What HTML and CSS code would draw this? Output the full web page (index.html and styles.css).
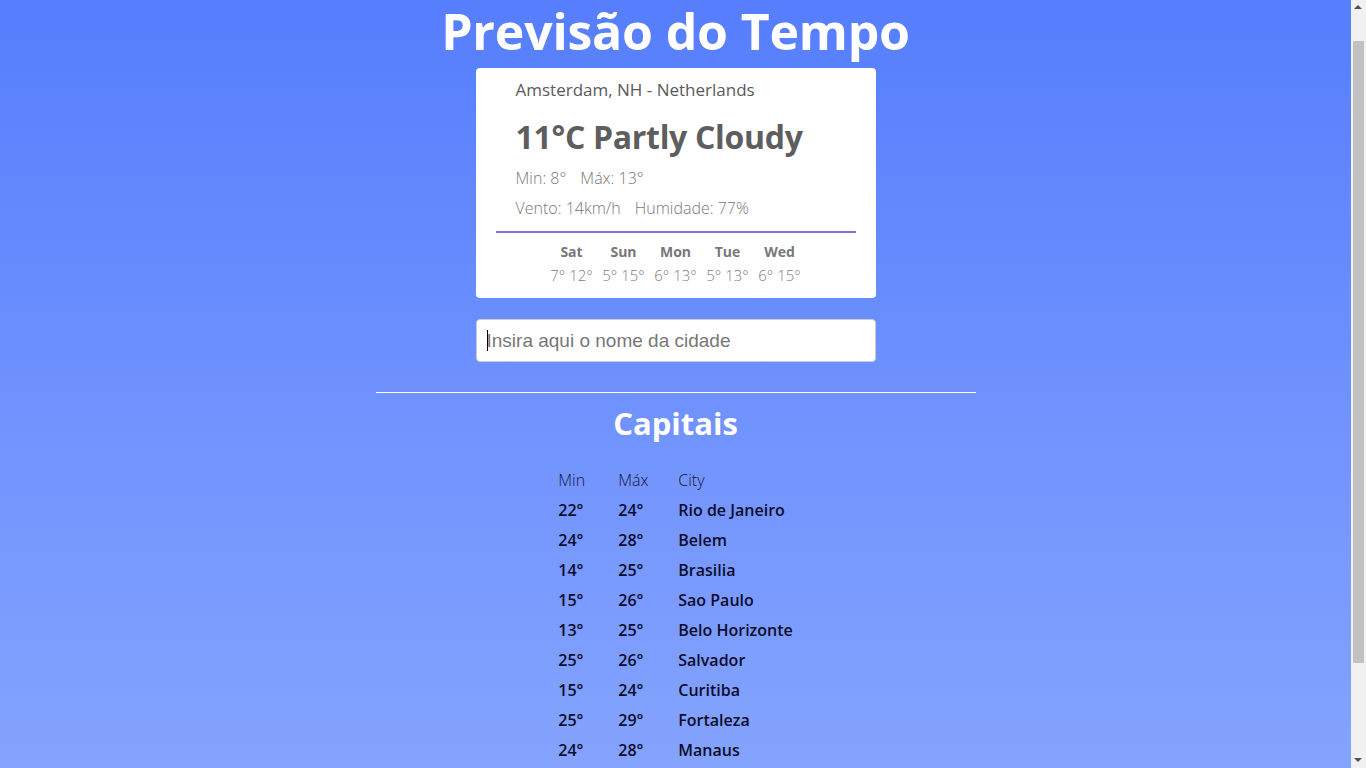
FILE: index.html
```html
<!DOCTYPE html>
<html lang="pt">
<head>
<meta charset="utf-8">
<title>Previsão do Tempo</title>
<link rel="stylesheet" href="styles.css">
</head>
<body>
<main class="page">
  <h1 class="title">Previsão do Tempo</h1>
  <section class="card">
    <p class="location">Amsterdam, NH - Netherlands</p>
    <h2 class="current">11°C Partly Cloudy</h2>
    <p class="info first"><span>Min: 8°</span><span>Máx: 13°</span></p>
    <p class="info"><span>Vento: 14km/h</span><span>Humidade: 77%</span></p>
    <div class="forecast">
      <div class="day"><span class="dname">Sat</span><span class="dtemp">7° 12°</span></div>
      <div class="day"><span class="dname">Sun</span><span class="dtemp">5° 15°</span></div>
      <div class="day"><span class="dname">Mon</span><span class="dtemp">6° 13°</span></div>
      <div class="day"><span class="dname">Tue</span><span class="dtemp">5° 13°</span></div>
      <div class="day"><span class="dname">Wed</span><span class="dtemp">6° 15°</span></div>
    </div>
  </section>
  <div class="search-wrap">
    <span class="caret"></span>
    <input class="search" type="text" placeholder="Insira aqui o nome da cidade">
  </div>
  <hr class="sep">
  <h2 class="caps-title">Capitais</h2>
  <table class="capitals">
    <thead>
      <tr><th>Min</th><th>Máx</th><th>City</th></tr>
    </thead>
    <tbody>
      <tr><td>22°</td><td>24°</td><td>Rio de Janeiro</td></tr>
      <tr><td>24°</td><td>28°</td><td>Belem</td></tr>
      <tr><td>14°</td><td>25°</td><td>Brasilia</td></tr>
      <tr><td>15°</td><td>26°</td><td>Sao Paulo</td></tr>
      <tr><td>13°</td><td>25°</td><td>Belo Horizonte</td></tr>
      <tr><td>25°</td><td>26°</td><td>Salvador</td></tr>
      <tr><td>15°</td><td>24°</td><td>Curitiba</td></tr>
      <tr><td>25°</td><td>29°</td><td>Fortaleza</td></tr>
      <tr><td>24°</td><td>28°</td><td>Manaus</td></tr>
      <tr><td>23°</td><td>30°</td><td>Joao Pessoa</td></tr>
    </tbody>
  </table>
</main>
<div class="scrollbar" aria-hidden="true">
  <span class="arrow up"></span>
  <span class="thumb"></span>
  <span class="arrow down"></span>
</div>
</body>
</html>
```

FILE: styles.css
```css
html {
  min-height: 100%;
  background: linear-gradient(to bottom, #567efd 0%, #8aa8fe 100%);
}
body {
  margin: 0;
  padding-right: 15px;
  font-family: "Open Sans", "DejaVu Sans", sans-serif;
}
.page {
  display: flex;
  flex-direction: column;
  align-items: center;
  padding-bottom: 60px;
}
.title {
  margin: 0 0 4px;
  height: 64px;
  line-height: 62px;
  font-size: 50px;
  font-weight: 700;
  color: #fff;
  letter-spacing: -0.2px;
}
.card {
  width: 400px;
  box-sizing: border-box;
  height: 230px;
  background: #fff;
  border-radius: 4px;
  padding: 10px 20px 0;
  display: flex;
  flex-direction: column;
}
.location {
  margin: 0;
  padding-left: 20px;
  font-size: 17px;
  line-height: 24px;
  color: #5a5a5a;
}
.current {
  margin: 12px 0 0;
  padding-left: 20px;
  font-size: 32px;
  line-height: 46px;
  font-weight: 700;
  color: #5e5e5e;
  letter-spacing: -0.3px;
}
.info {
  margin: 0;
  padding-left: 20px;
  font-size: 16px;
  line-height: 30px;
  font-weight: 300;
  color: #777;
  display: flex;
  gap: 14px;
}
.info.first {
  margin-top: 3px;
}
.forecast {
  margin-top: 8px;
  border-top: 2px solid #7a72cf;
  padding-top: 8px;
  display: flex;
  justify-content: center;
  gap: 10px;
}
.day {
  display: flex;
  flex-direction: column;
  align-items: center;
  width: 42px;
}
.dname {
  font-size: 14px;
  line-height: 22px;
  font-weight: 700;
  color: #777;
}
.dtemp {
  font-size: 15px;
  line-height: 24px;
  font-weight: 300;
  color: #808080;
  white-space: nowrap;
}
.search-wrap {
  margin-top: 21px;
  position: relative;
}
.search {
  display: block;
  width: 400px;
  height: 43px;
  box-sizing: border-box;
  border: 1px solid #ccc;
  border-radius: 4px;
  padding: 0 10px;
  font-family: "Liberation Sans", Arial, sans-serif;
  font-size: 19px;
  color: #333;
  outline: none;
}
.search::placeholder {
  color: #777;
}
.caret {
  position: absolute;
  left: 11px;
  top: 11px;
  width: 1px;
  height: 21px;
  background: #000;
  z-index: 1;
}
.sep {
  margin: 30px 0 0;
  width: 600px;
  border: 0;
  border-top: 1px solid #fff;
  height: 0;
}
.caps-title {
  margin: 10px 0 0;
  font-size: 31px;
  line-height: 40px;
  font-weight: 700;
  color: #fff;
}
.capitals {
  margin-top: 22px;
  border-collapse: collapse;
  color: #0c0c2c;
}
.capitals th,
.capitals td {
  text-align: left;
  padding: 0;
  height: 30px;
  font-size: 16px;
}
.capitals th {
  font-weight: 300;
  color: #14143a;
}
.capitals th:nth-child(1),
.capitals th:nth-child(2) {
  width: 60px;
}
.capitals td {
  font-weight: 600;
}
.scrollbar {
  position: fixed;
  top: 0;
  right: 0;
  width: 15px;
  height: 100vh;
  background: #f1f1f1;
}
.thumb {
  position: absolute;
  left: 2px;
  width: 11px;
  top: 41px;
  height: 622px;
  background: #c1c1c1;
}
.arrow {
  position: absolute;
  left: 3px;
  width: 0;
  height: 0;
  border-left: 4.5px solid transparent;
  border-right: 4.5px solid transparent;
}
.arrow.up {
  top: 5px;
  border-bottom: 4px solid #505050;
}
.arrow.down {
  bottom: 6px;
  border-top: 4px solid #505050;
}
```
